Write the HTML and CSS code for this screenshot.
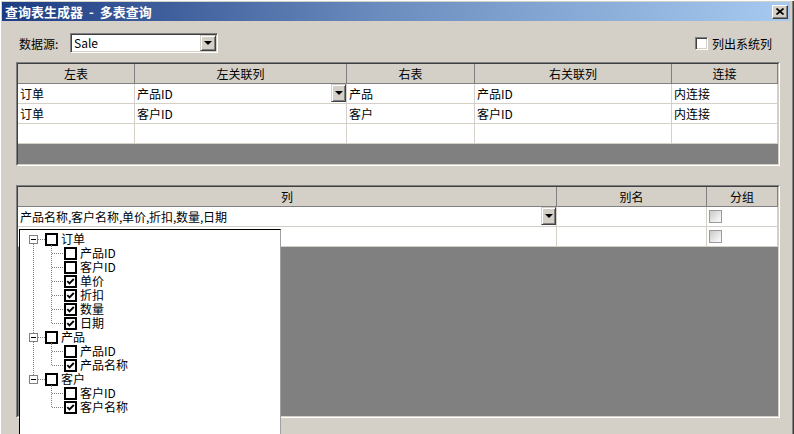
FILE: index.html
```html
<!DOCTYPE html>
<html lang="zh-CN">
  <head>
    <meta charset="UTF-8" />
    <title>查询表生成器 - 多表查询</title>
    <link rel="stylesheet" href="styles.css">
  </head>
  <body>
    <div class="window">
      <!-- 标题栏 -->
      <div class="titlebar">
        <span class="title">查询表生成器 - 多表查询</span>
        <span class="close-btn">
          <svg width="8" height="7" viewBox="0 0 8 7">
            <path d="M0.5 0.5 L7.5 6.5 M7.5 0.5 L0.5 6.5" stroke="#000" stroke-width="1.7" fill="none"/>
          </svg>
        </span>
      </div>

      <div class="content">
        <div class="source-row">
          <span class="source-label">数据源:</span>
          <div class="combo">
            <span class="combo-text">Sale</span>
            <span class="drop-btn"><i class="arrow"></i></span>
          </div>
          <label class="sys-check"><span class="check3d"></span>列出系统列</label>
        </div>

        <!-- 表连接 -->
        <div class="grid">
          <div class="grid-inner join-inner">
            <div class="grid-table join-table">
              <div class="hcell">左表</div>
              <div class="hcell">左关联列</div>
              <div class="hcell">右表</div>
              <div class="hcell">右关联列</div>
              <div class="hcell">连接</div>

              <div class="cell">订单</div>
              <div class="cell combo-cell">产品ID<span class="drop-btn cell-btn"><i class="arrow"></i></span></div>
              <div class="cell">产品</div>
              <div class="cell">产品ID</div>
              <div class="cell">内连接</div>

              <div class="cell">订单</div>
              <div class="cell">客户ID</div>
              <div class="cell">客户</div>
              <div class="cell">客户ID</div>
              <div class="cell">内连接</div>

              <div class="cell"></div>
              <div class="cell"></div>
              <div class="cell"></div>
              <div class="cell"></div>
              <div class="cell"></div>
            </div>
          </div>
        </div>

        <!-- 列 -->
        <div class="grid grid-cols">
          <div class="grid-inner cols-inner">
            <div class="grid-table cols-table">
              <div class="hcell">列</div>
              <div class="hcell">别名</div>
              <div class="hcell">分组</div>

              <div class="cell combo-cell"><span class="col-list">产品名称, 客户名称, 单价, 折扣, 数量, 日期</span><span class="drop-btn cell-btn"><i class="arrow"></i></span></div>
              <div class="cell"></div>
              <div class="cell"><span class="flat-check"></span></div>

              <div class="cell"></div>
              <div class="cell"></div>
              <div class="cell"><span class="flat-check"></span></div>
            </div>
          </div>
        </div>
      </div>

      <!-- 下拉树 -->
      <div class="tree-popup">
        <div class="node">
          <div class="tree-row parent"><span class="expander"></span><span class="hline"></span><span class="tcheck"></span><span class="tlabel">订单</span></div>
          <div class="children">
            <div class="tree-row child"><span class="tcheck"></span><span class="tlabel">产品ID</span></div>
            <div class="tree-row child"><span class="tcheck"></span><span class="tlabel">客户ID</span></div>
            <div class="tree-row child"><span class="tcheck"><svg width="9" height="9" viewBox="0 0 9 9"><path d="M1.3 4.2 L3.5 6.4 L7.8 2" stroke="#000" stroke-width="1.9" fill="none"/></svg></span><span class="tlabel">单价</span></div>
            <div class="tree-row child"><span class="tcheck"><svg width="9" height="9" viewBox="0 0 9 9"><path d="M1.3 4.2 L3.5 6.4 L7.8 2" stroke="#000" stroke-width="1.9" fill="none"/></svg></span><span class="tlabel">折扣</span></div>
            <div class="tree-row child"><span class="tcheck"><svg width="9" height="9" viewBox="0 0 9 9"><path d="M1.3 4.2 L3.5 6.4 L7.8 2" stroke="#000" stroke-width="1.9" fill="none"/></svg></span><span class="tlabel">数量</span></div>
            <div class="tree-row child"><span class="tcheck"><svg width="9" height="9" viewBox="0 0 9 9"><path d="M1.3 4.2 L3.5 6.4 L7.8 2" stroke="#000" stroke-width="1.9" fill="none"/></svg></span><span class="tlabel">日期</span></div>
          </div>
        </div>
        <div class="node">
          <div class="tree-row parent"><span class="expander"></span><span class="hline"></span><span class="tcheck"></span><span class="tlabel">产品</span></div>
          <div class="children">
            <div class="tree-row child"><span class="tcheck"></span><span class="tlabel">产品ID</span></div>
            <div class="tree-row child"><span class="tcheck"><svg width="9" height="9" viewBox="0 0 9 9"><path d="M1.3 4.2 L3.5 6.4 L7.8 2" stroke="#000" stroke-width="1.9" fill="none"/></svg></span><span class="tlabel">产品名称</span></div>
          </div>
        </div>
        <div class="node">
          <div class="tree-row parent"><span class="expander"></span><span class="hline"></span><span class="tcheck"></span><span class="tlabel">客户</span></div>
          <div class="children">
            <div class="tree-row child"><span class="tcheck"></span><span class="tlabel">客户ID</span></div>
            <div class="tree-row child"><span class="tcheck"><svg width="9" height="9" viewBox="0 0 9 9"><path d="M1.3 4.2 L3.5 6.4 L7.8 2" stroke="#000" stroke-width="1.9" fill="none"/></svg></span><span class="tlabel">客户名称</span></div>
          </div>
        </div>
      </div>
    </div>
  </body>
</html>
```

FILE: styles.css
```css
body {
  margin: 0;
  font-family: "Noto Sans CJK SC", "Liberation Sans", sans-serif;
  font-size: 12px;
  color: #000;
  background: #d4d0c8;
}
.window {
  position: relative;
  width: 794px;
  height: 434px;
  box-sizing: border-box;
  padding: 2px 4px 0 2px;
  background: #d4d0c8;
  overflow: hidden;
  box-shadow: inset 1px 1px #fff, inset -1px 0 #404040, inset -2px 0 #808080;
}

/* 标题栏 */
.titlebar {
  display: flex;
  align-items: center;
  height: 19px;
  background: linear-gradient(to right, #1d3c82, #6d8fc0 50%, #a6caf0);
}
.title {
  padding-left: 3px;
  color: #fff;
  font-weight: bold;
  font-size: 13px;
  line-height: 19px;
  word-spacing: 3px;
}
.close-btn {
  display: flex;
  align-items: center;
  justify-content: center;
  width: 16px;
  height: 14px;
  margin-left: auto;
  margin-right: 2px;
  box-sizing: border-box;
  background: #d4d0c8;
  border: 1px solid;
  border-color: #fff #404040 #404040 #fff;
  box-shadow: inset -1px -1px #808080;
}

.content {
  padding: 0 10px 0 14px;
}

/* 数据源 */
.source-row {
  display: flex;
  align-items: center;
  height: 20px;
  margin-top: 12px;
}
.source-label {
  width: 51px;
  margin-left: 3px;
}
.combo {
  display: flex;
  align-items: center;
  width: 148px;
  height: 20px;
  box-sizing: border-box;
  background: #fff;
  border: 1px solid;
  border-color: #808080 #fff #fff #808080;
  box-shadow: inset 1px 1px #404040, inset -1px -1px #d4d0c8;
  padding: 1px;
}
.combo-text {
  flex: 1;
  padding-left: 2px;
  line-height: 16px;
}
.drop-btn {
  display: flex;
  align-items: center;
  justify-content: center;
  width: 16px;
  height: 16px;
  box-sizing: border-box;
  background: #d4d0c8;
  border: 1px solid;
  border-color: #d4d0c8 #404040 #404040 #d4d0c8;
  box-shadow: inset 1px 1px #fff, inset -1px -1px #808080;
}
.arrow {
  width: 0;
  height: 0;
  border-left: 4px solid transparent;
  border-right: 4px solid transparent;
  border-top: 4px solid #000;
}
.sys-check {
  display: flex;
  align-items: center;
  margin-left: auto;
  margin-right: 8px;
}
.check3d {
  width: 13px;
  height: 13px;
  box-sizing: border-box;
  margin-right: 4px;
  background: #fff;
  border: 1px solid;
  border-color: #808080 #fff #fff #808080;
  box-shadow: inset 1px 1px #404040, inset -1px -1px #d4d0c8;
}

/* 表格 */
.grid {
  margin-top: 9px;
  border: 1px solid;
  border-color: #808080 #fff #fff #808080;
}
.grid-cols {
  margin-top: 19px;
}
.grid-inner {
  border: 1px solid;
  border-color: #404040 #d4d0c8 #d4d0c8 #404040;
  background: #808080;
}
.join-inner {
  height: 100px;
}
.cols-inner {
  height: 229px;
}
.grid-table {
  display: grid;
  grid-auto-rows: 20px;
}
.join-table {
  grid-template-columns: 117px 212px 128px 197px 106px;
}
.cols-table {
  grid-template-columns: 539px 150px 71px;
}
.hcell {
  box-sizing: border-box;
  background: #d4d0c8;
  border-right: 1px solid #808080;
  border-bottom: 1px solid #808080;
  text-align: center;
  line-height: 19px;
}
.cell {
  display: flex;
  align-items: center;
  box-sizing: border-box;
  padding-left: 2px;
  background: #fff;
  border-right: 1px solid #d4d0c8;
  border-bottom: 1px solid #d4d0c8;
  white-space: nowrap;
}
.combo-cell {
  justify-content: space-between;
}
.col-list {
  word-spacing: -3px;
}
.cell-btn {
  width: 15px;
  height: 18px;
  align-self: flex-start;
}
.flat-check {
  width: 13px;
  height: 13px;
  box-sizing: border-box;
  border: 1px solid #9a9a9a;
  background: linear-gradient(135deg, #c9c9c9, #f4f4f4 80%);
}

/* 下拉树 */
.tree-popup {
  position: absolute;
  left: 19px;
  top: 229px;
  width: 262px;
  height: 215px;
  box-sizing: border-box;
  padding-top: 2px;
  background: #fff;
  border: 1px solid #000;
  border-right-color: #a0a0a0;
}
.node {
  position: relative;
}
.node:not(:last-child)::before {
  content: "";
  position: absolute;
  left: 13px;
  top: 12px;
  bottom: -3px;
  border-left: 1px dotted #808080;
}
.children {
  position: relative;
}
.children::before {
  content: "";
  position: absolute;
  left: 31px;
  top: -1px;
  bottom: 7px;
  border-left: 1px dotted #808080;
}
.tree-row {
  position: relative;
  display: flex;
  align-items: center;
  height: 14px;
  white-space: nowrap;
}
.tlabel {
  line-height: 14px;
}
.parent {
  padding-left: 9px;
}
.child {
  padding-left: 44px;
}
.child::before {
  content: "";
  position: absolute;
  left: 32px;
  top: 7px;
  width: 11px;
  border-top: 1px dotted #808080;
}
.expander {
  position: relative;
  width: 9px;
  height: 9px;
  box-sizing: border-box;
  border: 1px solid #808080;
  background: #fff;
}
.expander::after {
  content: "";
  position: absolute;
  left: 1px;
  top: 3px;
  width: 5px;
  height: 1px;
  background: #000;
}
.hline {
  width: 7px;
  border-top: 1px dotted #808080;
}
.tcheck {
  display: flex;
  align-items: center;
  justify-content: center;
  width: 13px;
  height: 13px;
  box-sizing: border-box;
  margin-right: 3px;
  border: 2px solid #000;
  background: #fff;
}
```
